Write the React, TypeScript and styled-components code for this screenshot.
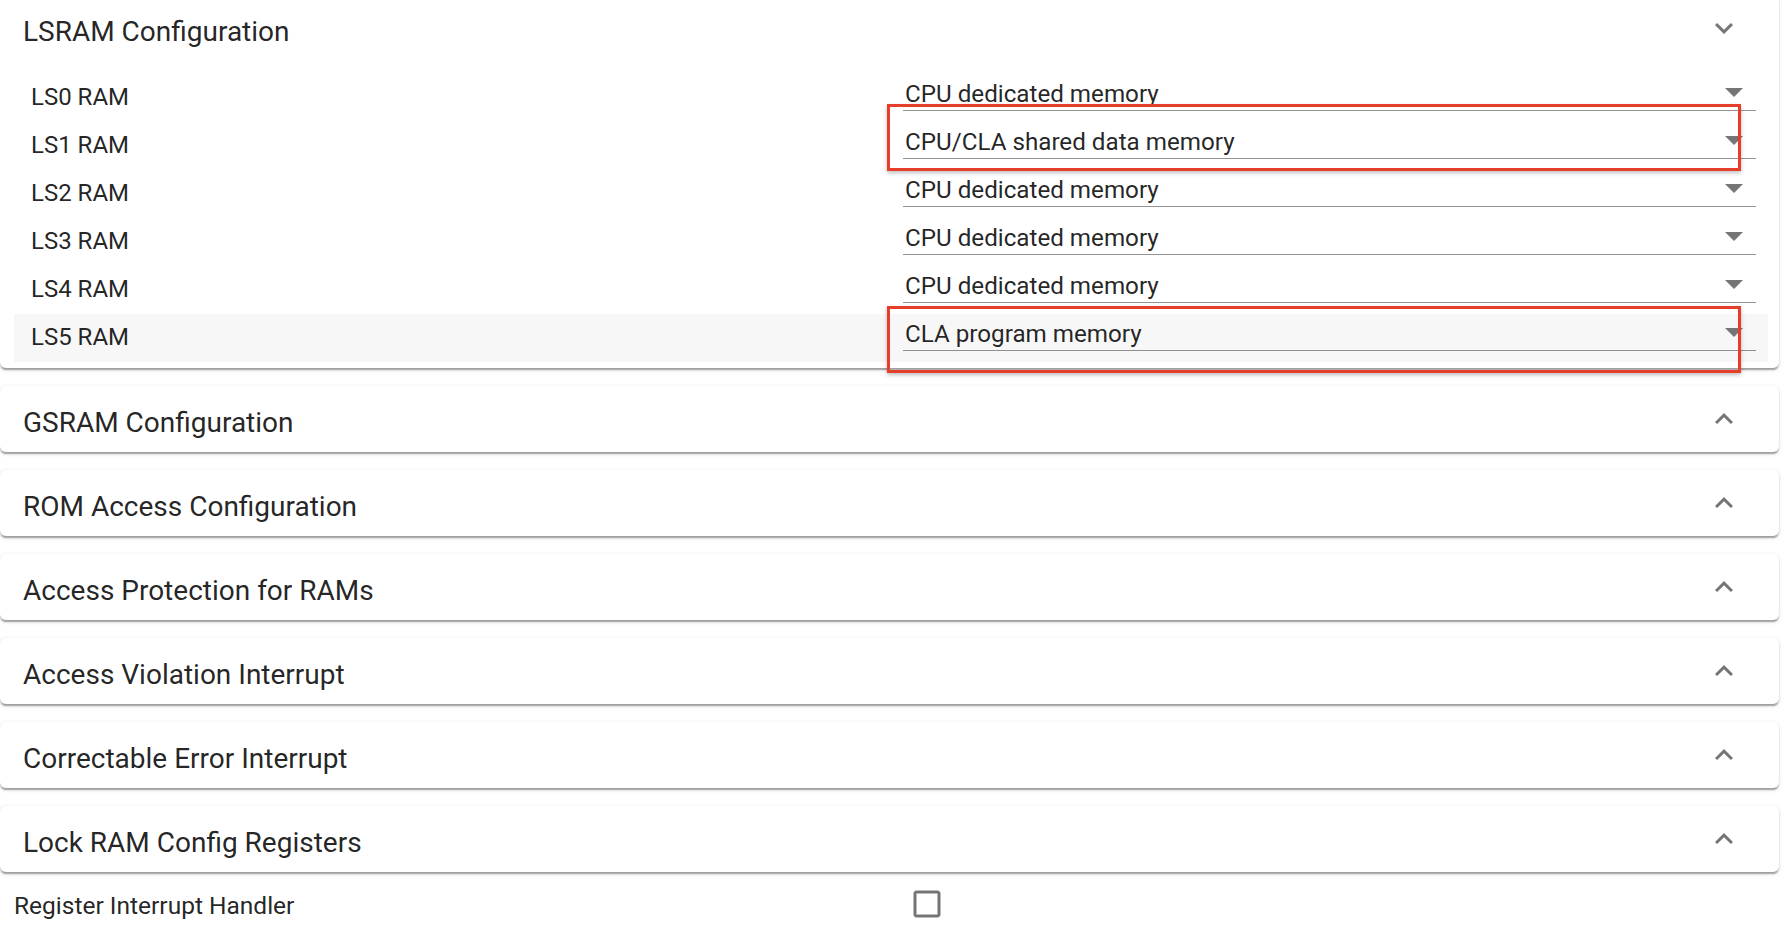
import React from "react";
import styled, { createGlobalStyle } from "styled-components";

const GlobalStyle = createGlobalStyle`
  html, body {
    margin: 0;
    padding: 0;
    background: #ffffff;
  }
  body {
    font-family: Roboto, "Noto Sans", "Liberation Sans", sans-serif;
    color: rgba(0, 0, 0, 0.87);
    overflow: hidden;
  }
`;

const Page = styled.main`
  width: 1779px;
  margin-top: -5px;
  display: flex;
  flex-direction: column;
`;

const CardStack = styled.div`
  display: flex;
  flex-direction: column;
  gap: 18px;
`;

const Card = styled.section`
  background: #ffffff;
  border-radius: 6px;
  box-shadow: 0px 3px 1.5px -1.5px rgba(0, 0, 0, 0.2),
    0px 1.5px 1.5px 0px rgba(0, 0, 0, 0.14),
    0px 1.5px 4.5px 0px rgba(0, 0, 0, 0.12);
`;

const CardHeader = styled.div`
  display: flex;
  align-items: center;
  justify-content: space-between;
  height: 66px;
  padding: 0 37px 0 23px;
  cursor: pointer;
`;

const CardTitle = styled.h2`
  margin: 8px 0 0 0;
  font-size: 28px;
  font-weight: 400;
  line-height: 1.2;
  color: rgba(0, 0, 0, 0.87);
`;

const Details = styled.div`
  display: flex;
  flex-direction: column;
  padding: 13px 11px 6px 14px;
`;

const Row = styled.div<{ $highlight?: boolean }>`
  position: relative;
  display: grid;
  grid-template-columns: 872px 1fr;
  height: 48px;
  padding: 0 12px 0 17px;
  background: ${(p) => (p.$highlight ? "#f7f7f7" : "transparent")};
`;

const RowLabel = styled.span`
  font-size: 24px;
  line-height: 47px;
  color: rgba(0, 0, 0, 0.87);
`;

const SelectField = styled.div`
  display: flex;
  align-self: start;
  padding: 5.5px 0 2.5px 2px;
  border-bottom: 1.5px solid rgba(0, 0, 0, 0.42);
`;

const SelectValue = styled.span`
  flex: 1;
  font-size: 24.2px;
  line-height: 28px;
  color: rgba(0, 0, 0, 0.87);
  white-space: nowrap;
`;

const DropArrow = styled.svg`
  flex: none;
  margin: 8.5px 13px 0 0;
  fill: #757575;
`;

const Annotation = styled.div<{ $top: number }>`
  position: absolute;
  left: 873px;
  top: ${(p) => p.$top}px;
  width: 854px;
  height: 67px;
  box-sizing: border-box;
  border: 3px solid #e63e2b;
  box-shadow: 0 2px 4px rgba(0, 0, 0, 0.25);
  pointer-events: none;
`;

const Chevron = styled.svg`
  flex: none;
  fill: #757575;
`;

const CheckRow = styled.div`
  display: grid;
  grid-template-columns: 894.5px auto;
  align-items: center;
  height: 48px;
  margin-top: 10px;
  padding-left: 14px;
`;

const CheckLabel = styled.span`
  font-size: 24.5px;
  line-height: 48px;
  color: rgba(0, 0, 0, 0.87);
`;

const CheckIcon = styled.svg`
  fill: rgba(0, 0, 0, 0.54);
  margin-top: -4px;
`;

const ExpandIcon: React.FC<{ open: boolean }> = ({ open }) => (
  <Chevron width={36} height={36} viewBox="0 0 24 24">
    {open ? (
      <path d="M16.59 8.59 12 13.17 7.41 8.59 6 10l6 6 6-6z" />
    ) : (
      <path d="m12 8-6 6 1.41 1.41L12 10.83l4.59 4.58L18 14z" />
    )}
  </Chevron>
);

type LsRow = { label: string; value: string; annotate?: number; highlight?: boolean };

const lsRows: LsRow[] = [
  { label: "LS0 RAM", value: "CPU dedicated memory" },
  { label: "LS1 RAM", value: "CPU/CLA shared data memory", annotate: -18 },
  { label: "LS2 RAM", value: "CPU dedicated memory" },
  { label: "LS3 RAM", value: "CPU dedicated memory" },
  { label: "LS4 RAM", value: "CPU dedicated memory" },
  { label: "LS5 RAM", value: "CLA program memory", annotate: -8.5, highlight: true },
];

const collapsed = [
  "GSRAM Configuration",
  "ROM Access Configuration",
  "Access Protection for RAMs",
  "Access Violation Interrupt",
  "Correctable Error Interrupt",
  "Lock RAM Config Registers",
];

export default function App() {
  return (
    <>
      <GlobalStyle />
      <Page>
        <CardStack>
          <Card>
            <CardHeader>
              <CardTitle>LSRAM Configuration</CardTitle>
              <ExpandIcon open />
            </CardHeader>
            <Details>
              {lsRows.map((r) => (
                <Row key={r.label} $highlight={r.highlight}>
                  <RowLabel>{r.label}</RowLabel>
                  <SelectField>
                    <SelectValue>{r.value}</SelectValue>
                    <DropArrow width={18} height={9} viewBox="0 0 18 9">
                      <polygon points="0,0 18,0 9,9" />
                    </DropArrow>
                  </SelectField>
                  {r.annotate !== undefined && <Annotation $top={r.annotate} />}
                </Row>
              ))}
            </Details>
          </Card>
          {collapsed.map((t) => (
            <Card key={t}>
              <CardHeader>
                <CardTitle>{t}</CardTitle>
                <ExpandIcon open={false} />
              </CardHeader>
            </Card>
          ))}
        </CardStack>
        <CheckRow>
          <CheckLabel>Register Interrupt Handler</CheckLabel>
          <CheckIcon width={36} height={36} viewBox="0 0 24 24">
            <path d="M19 5v14H5V5h14m0-2H5c-1.11 0-2 .9-2 2v14c0 1.1.89 2 2 2h14c1.1 0 2-.9 2-2V5c0-1.1-.9-2-2-2z" />
          </CheckIcon>
        </CheckRow>
      </Page>
    </>
  );
}
